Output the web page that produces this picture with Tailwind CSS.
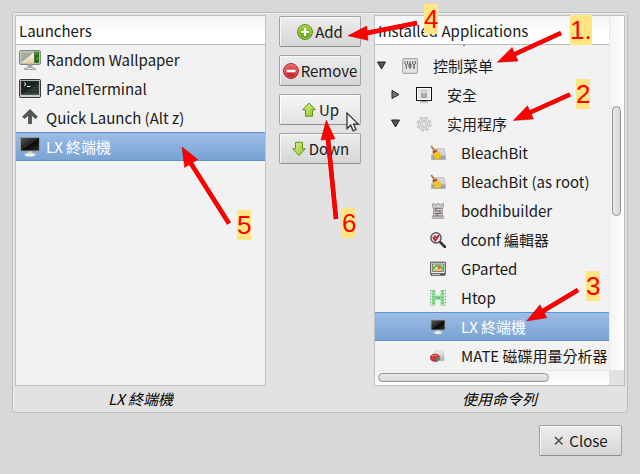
<!DOCTYPE html>
<html lang="zh-Hant">
<head>
<meta charset="utf-8">
<meta name="viewport" content="width=device-width, initial-scale=1">
<title>Launchers</title>
<script src="https://cdn.jsdelivr.net/npm/@tailwindcss/browser@4"></script>
</head>
<body class="relative flex min-h-screen flex-col gap-3 bg-[#d8d8d8] px-3 pt-3 pb-[18px] font-['Noto_Sans_CJK_TC','Noto_Sans_CJK_SC',sans-serif] text-[15px] leading-5 text-[#1a1a1a]">

<svg class="absolute size-0" aria-hidden="true">
  <defs>
    <linearGradient id="screen" x1="0" y1="0" x2="1" y2="1"><stop offset="0" stop-color="#555"/><stop offset=".5" stop-color="#222"/><stop offset=".52" stop-color="#080808"/><stop offset="1" stop-color="#2a2a2a"/></linearGradient>
    <linearGradient id="green" x1="0" y1="0" x2="0" y2="1"><stop offset="0" stop-color="#a6d33c"/><stop offset="1" stop-color="#5b9a0e"/></linearGradient>
    <linearGradient id="lime" x1="0" y1="0" x2="1" y2="1"><stop offset="0" stop-color="#dcee8a"/><stop offset="1" stop-color="#8fc52a"/></linearGradient>
    <linearGradient id="red" x1="0" y1="0" x2="0" y2="1"><stop offset="0" stop-color="#ee6a6a"/><stop offset="1" stop-color="#b81420"/></linearGradient>
    <linearGradient id="metal" x1="0" y1="0" x2="0" y2="1"><stop offset="0" stop-color="#f4f4f4"/><stop offset="1" stop-color="#a8a8a8"/></linearGradient>
    <linearGradient id="sand" x1="0" y1="0" x2="0" y2="1"><stop offset="0" stop-color="#fff"/><stop offset="1" stop-color="#edc795"/></linearGradient>
    <symbol id="monitor" viewBox="0 0 22 22">
      <rect x="1" y="1" width="20" height="14.5" rx="1" fill="#999"/>
      <rect x="2" y="2" width="18" height="12.5" fill="url(#screen)"/>
      <path d="M9 15.5h4l.5 3h-5z" fill="#ccc"/>
      <ellipse cx="11" cy="18.8" rx="5.4" ry="1.8" fill="#f2f2f2" stroke="#b9c3cf" stroke-width=".5"/>
    </symbol>
    <symbol id="broom" viewBox="0 0 16 16">
      <path d="M4 3.5h10l1.500 7v4H1.500v-4z" fill="#d4d4d4" stroke="#b0b0b0" stroke-width=".6"/>
      <path d="M1.500 10.500h14v4h-14z" fill="#a5a5a5"/>
      <path d="M1.200 1 4.500 6" stroke="#b5782a" stroke-width="1.7"/>
      <path d="M2.500 6.500 6.300 4.500 7.500 6.500 3.500 8.600z" fill="#cc3a25"/>
      <path d="M3.400 8.600 7.500 6.400 12.300 11 7.600 14.600 4.600 13.500z" fill="#f5cf2d" stroke="#c69a10" stroke-width=".6"/>
      <path d="m5 9.500 2.500 3.800M7 8.200l3.300 4" stroke="#b98c14" stroke-width=".6"/>
    </symbol>
  </defs>
</svg>

<main class="flex flex-1 rounded-[3px] border border-[#bdbdbd] bg-[#e2e2e2] p-[2px] shadow-[inset_1px_1px_0_#ececec]">

  <section class="flex min-w-0 flex-1 flex-col" aria-labelledby="launchers-title">
    <div class="flex flex-1 flex-col border border-[#c0c0c0] bg-[#f2f2f2]">
      <h2 id="launchers-title" class="flex h-[29px] items-center border-b border-[#b8b8b8] bg-linear-to-b from-[#f4f4f4] to-white to-60% px-[3px] pt-px">Launchers</h2>
      <ul role="listbox" aria-labelledby="launchers-title">
        <li role="option" class="flex h-[29px] items-center gap-[5px] px-[3px]">
          <svg class="size-[22px]" viewBox="0 0 22 22">
            <rect x=".6" y="1.6" width="20.8" height="13.8" rx="1" fill="#c7cbc3" stroke="#777d73"/>
            <rect x="2.4" y="3.4" width="12.6" height="10.2" fill="#a3ab9d"/>
            <path d="M2.4 13.6 15 3.4v10.2z" fill="#e5e6df"/>
            <path d="m5 14 9.5-10.5V14z" fill="url(#sand)"/>
            <rect x="15.2" y="2.7" width="4.8" height="11.2" fill="#276a12"/>
            <path d="M16 3h3v3h-3zM17.5 8h2v3h-2z" fill="#4d9430"/>
            <path d="M8.5 15.5h5v3h-5z" fill="#aaa"/>
            <path d="M5.5 19.5q5.5-2.5 11 0v1h-11z" fill="#e8e8e8" stroke="#858585" stroke-width=".7"/>
          </svg>
          <span>Random Wallpaper</span>
        </li>
        <li role="option" class="flex h-[29px] items-center gap-[5px] px-[3px]">
          <svg class="size-[22px]" viewBox="0 0 22 22">
            <rect x=".5" y="1.5" width="21" height="18" rx="1" fill="#b5b5b5" stroke="#3a3a3a"/>
            <rect x="2" y="3" width="18" height="13.5" fill="#1d2727"/>
            <path d="M2 16.5 20 6v10.5z" fill="#34403d"/>
            <path d="M3 6h16M3 8.5h16M3 11h16M3 13.5h16" stroke="#111b19" stroke-width=".6"/>
            <path d="m5 4.5 2 1.7L5 7.8M8 8.5h3.5" fill="none" stroke="#f0f0f0"/>
            <path d="M1.5 18h19" stroke="#e0e0e0"/>
          </svg>
          <span>PanelTerminal</span>
        </li>
        <li role="option" class="flex h-[29px] items-center gap-[5px] px-[3px]">
          <svg class="size-[22px]" viewBox="0 0 22 22"><path d="m11 2 7.8 7.8-2.3 2.3-3.6-3.2V17H9.1V8.900l-3.6 3.2-2.3-2.3z" fill="#555"/></svg>
          <span>Quick Launch (Alt z)</span>
        </li>
        <li role="option" aria-selected="true" class="flex h-[29px] items-center gap-[5px] border-y border-[#5f92cb] bg-linear-to-b from-[#9dbde6] to-[#78a3d4] px-[3px] text-white">
          <svg class="size-[22px]"><use href="#monitor"/></svg>
          <span>LX 終端機</span>
        </li>
      </ul>
    </div>
    <p class="h-6 pt-[3px] text-center leading-5 text-black italic">LX 終端機</p>
  </section>

  <div class="flex w-[108px] shrink-0 flex-col gap-2 px-[13px] pt-px">
    <button class="flex h-[31px] items-center justify-center gap-[2px] rounded-[2px] border border-[#a3a3a3] border-b-[#8e8e8e] bg-linear-to-b from-[#ededed] to-[#d6d6d6] pt-px shadow-[inset_1px_1px_0_#f8f8f8]">
      <svg class="size-4" viewBox="0 0 16 16"><circle cx="8" cy="8" r="7.4" fill="url(#green)" stroke="#4e8409"/><circle cx="8" cy="8" r="6.4" fill="none" stroke="#c3e37b" stroke-width=".7"/><path d="M8 4v8M4 8h8" stroke="#fff" stroke-width="2.2"/></svg>
      <span>Add</span>
    </button>
    <button class="flex h-[31px] items-center justify-center gap-[2px] rounded-[2px] border border-[#a3a3a3] border-b-[#8e8e8e] bg-linear-to-b from-[#ededed] to-[#d6d6d6] pt-px shadow-[inset_1px_1px_0_#f8f8f8]">
      <svg class="size-4" viewBox="0 0 16 16"><circle cx="8" cy="8" r="7.4" fill="url(#red)" stroke="#ab1019"/><circle cx="8" cy="8" r="6.4" fill="none" stroke="#f09090" stroke-width=".6"/><path d="M3.5 8h9" stroke="#fff" stroke-width="2.6"/></svg>
      <span>Remove</span>
    </button>
    <button class="flex h-[31px] items-center justify-center gap-[2px] rounded-[2px] border border-[#a3a3a3] border-b-[#8e8e8e] bg-linear-to-b from-[#f6f6f6] to-[#e2e2e2] pt-px shadow-[inset_1px_1px_0_#ffffff]">
      <svg class="size-4" viewBox="0 0 16 16"><path d="m8 1 6.3 6.7h-2.8v6.5h-7V7.7H1.7z" fill="url(#lime)" stroke="#649321" stroke-linejoin="round"/></svg>
      <span>Up</span>
    </button>
    <button class="flex h-[31px] items-center justify-center gap-[2px] rounded-[2px] border border-[#a3a3a3] border-b-[#8e8e8e] bg-linear-to-b from-[#ededed] to-[#d6d6d6] pt-px shadow-[inset_1px_1px_0_#f8f8f8]">
      <svg class="size-4" viewBox="0 0 16 16"><path d="m8 14.5 6.3-6.7h-2.8V1.3h-7v6.5H1.7z" fill="url(#lime)" stroke="#649321" stroke-linejoin="round"/></svg>
      <span>Down</span>
    </button>
  </div>

  <section class="flex min-w-0 flex-1 flex-col" aria-labelledby="apps-title">
    <div class="grid flex-1 grid-cols-[minmax(0,1fr)_15px] grid-rows-[minmax(0,1fr)_15px] border border-[#c0c0c0] bg-[#f2f2f2]">
      <div class="overflow-hidden whitespace-nowrap">
        <h2 id="apps-title" class="flex h-[29px] items-center border-b border-[#b8b8b8] bg-linear-to-b from-[#f4f4f4] to-white to-60% px-[3px] pt-px">Installed Applications</h2>
        <div class="h-[6px] pl-[88px]"><div class="h-px w-[2px] bg-[#777]"></div></div>
        <ul role="tree" aria-labelledby="apps-title">
          <li role="treeitem" aria-expanded="true" class="flex h-[29px] items-center gap-[15px] pl-[1px]">
            <svg class="size-[11px]" viewBox="0 0 11 11"><path d="M1.5 2h8L5.5 9z" fill="#555" stroke="#222"/></svg>
            <svg class="size-4" viewBox="0 0 16 16"><rect x=".6" y=".6" width="14.8" height="14.8" rx="1.5" fill="#e3e3e3" stroke="#aaa" stroke-width="1.1"/><path d="M3 3v3l1.3 1L5.6 6V3M4.3 7v4M8 3v8M7 6h2v3H7zM12 11V7m-1.3-4v3L12 7l1.3-1V3M11 9h2" fill="none" stroke="#5c5c5c"/></svg>
            <span>控制菜单</span>
          </li>
          <li role="treeitem" aria-expanded="false" class="flex h-[29px] items-center gap-[15px] pl-[15px]">
            <svg class="size-[11px]" viewBox="0 0 11 11"><path d="M2 1.5v8l7-4z" fill="#777" stroke="#222"/></svg>
            <svg class="size-4" viewBox="0 0 16 16"><rect x=".5" y=".5" width="15" height="13" fill="#fff" stroke="#111"/><rect x="2" y="2" width="12" height="10" fill="#e4e4e4"/><path d="M6 6.5V5a2 2 0 0 1 4 0v1.500" fill="none" stroke="#aaa" stroke-width="1.2"/><path d="M5 6.3h6V11H5z" fill="#aaa"/><path d="M6 14h4v.5h2v1.2H4v-1.2h2z" fill="#aaa"/></svg>
            <span>安全</span>
          </li>
          <li role="treeitem" aria-expanded="true" class="flex h-[29px] items-center gap-[15px] pl-[15px]">
            <svg class="size-[11px]" viewBox="0 0 11 11"><path d="M1.5 2h8L5.5 9z" fill="#555" stroke="#222"/></svg>
            <svg class="size-4" viewBox="0 0 16 16"><circle cx="8" cy="8" r="6.2" fill="none" stroke="#c8c8c8" stroke-width="2.8" stroke-dasharray="2.9 1.97"/><circle cx="8" cy="8" r="5.8" fill="#dedede" stroke="#c8c8c8" stroke-width=".8"/><circle cx="8" cy="8" r="3.6" fill="none" stroke="#c6c6c6"/><circle cx="8" cy="8" r="1.6" fill="#f4f4f4" stroke="#bbb" stroke-width=".7"/></svg>
            <span>实用程序</span>
          </li>
          <li role="treeitem" class="flex h-[29px] items-center gap-[15px] pl-[55px]">
            <svg class="size-4 shrink-0"><use href="#broom"/></svg>
            <span>BleachBit</span>
          </li>
          <li role="treeitem" class="flex h-[29px] items-center gap-[15px] pl-[55px]">
            <svg class="size-4 shrink-0"><use href="#broom"/></svg>
            <span>BleachBit (as root)</span>
          </li>
          <li role="treeitem" class="flex h-[29px] items-center gap-[15px] pl-[55px]">
            <svg class="size-4 shrink-0" viewBox="0 0 16 16"><path d="M2.5.8h2.2v1h2V.8h2.6v1h2V.8h2.2V4l-1 1v7l1.2 1.6v1.8H2.3v-1.8L3.5 12V5l-1-1z" fill="#d0cccc" stroke="#8c8787" stroke-width=".7"/><path d="M4 5.3h8M4.5 8h7M4.5 10.5h7M3.5 13h9M6 5.3V8m4 0v2.5M7 10.5V13" stroke="#655f5f" stroke-width=".9"/></svg>
            <span>bodhibuilder</span>
          </li>
          <li role="treeitem" class="flex h-[29px] items-center gap-[15px] pl-[55px]">
            <svg class="size-4 shrink-0" viewBox="0 0 16 16"><path d="m10 10 5 5" stroke="#333" stroke-width="2.6" stroke-linecap="round"/><circle cx="6" cy="5.9" r="5.1" fill="#eee" stroke="#555" stroke-width="1.4"/><path d="m3 5 2.3 3.5L9 3M4.5 3.5l1.3 2" fill="none" stroke="#ba2430" stroke-width="2"/></svg>
            <span>dconf 編輯器</span>
          </li>
          <li role="treeitem" class="flex h-[29px] items-center gap-[15px] pl-[55px]">
            <svg class="size-4 shrink-0" viewBox="0 0 16 16"><path d="M.7 1.2h14.6v11.6H.7z" fill="#eee" stroke="#444"/><path d="M2.5 3h11v7.5h-11z" fill="#d8e8cf" stroke="#555" stroke-width=".7"/><path d="M3.5 9a4.5 4.5 0 0 1 9 0" fill="none" stroke="#6fba45" stroke-width="2.4"/><path d="M7.5 5a4 4 0 0 1 4 1.5L8 9z" fill="#e95f42"/><path d="M4 9.2h8" stroke="#e4bd45" stroke-width="1.3"/><path d="M.7 12.8h14.6v2H.7z" fill="#555"/><path d="M2 13.5h8" stroke="#ddd" stroke-width=".8"/></svg>
            <span>GParted</span>
          </li>
          <li role="treeitem" class="flex h-[29px] items-center gap-[15px] pl-[55px]">
            <svg class="size-4 shrink-0" viewBox="0 0 16 16"><path d="M0 0h5.5v5.5h5V0H16v15.5h-5.5V10h-5v5.5H0z" fill="#a5dfa8"/><path d="M1 1v14M15 1v14" stroke="#d2ead2" stroke-width="2"/><path d="M3.5 0v15.5M12.5 0v15.5" stroke="#62cc6b" stroke-width="2" stroke-dasharray="2 1"/><path d="M5.5 7.7h5" stroke="#62cc6b" stroke-width="2.4"/><path d="M.5 0v15.5M15.5 0v15.5" stroke="#8aa98b" stroke-dasharray="1 2"/></svg>
            <span>Htop</span>
          </li>
          <li role="treeitem" aria-selected="true" class="flex h-[29px] items-center gap-[15px] border-y border-[#5f92cb] bg-linear-to-b from-[#9dbde6] to-[#78a3d4] pl-[55px] text-white">
            <svg class="size-4 shrink-0"><use href="#monitor"/></svg>
            <span>LX 終端機</span>
          </li>
          <li role="treeitem" class="flex h-[29px] items-center gap-[15px] pl-[55px]">
            <svg class="size-4 shrink-0" viewBox="0 0 16 16"><path d="M5 2.8h7.5l1.5 5v5H4z" fill="url(#metal)" stroke="#bbb" stroke-width=".6"/><ellipse cx="5" cy="9.8" rx="4.8" ry="3.7" fill="#d33038" stroke="#9f1c25" stroke-width=".6"/><path d="M5.3 10 9.6 9a4 3 0 0 1-.9 3z" fill="#54a53a"/><path d="m5.3 10 3.4 2.2a5 4 0 0 1-3.5 1.2z" fill="#466fb5"/><path d="M2 8.5q2-2 5-1" stroke="#ee858a" fill="none"/></svg>
            <span>MATE 磁碟用量分析器</span>
          </li>
        </ul>
      </div>
      <div class="border-l border-[#e9e9e9] bg-linear-to-r from-[#f4f4f4] to-white px-[2px] pt-[90px]" role="scrollbar" aria-orientation="vertical" aria-label="Vertical">
        <div class="h-[110px] w-[9px] rounded-full border border-[#919191] bg-linear-to-r from-[#e9e9e9] to-[#d8d8d8]"></div>
      </div>
      <div class="border-t border-[#e9e9e9] bg-linear-to-b from-[#f4f4f4] to-white px-[3px] pt-[2px]" role="scrollbar" aria-orientation="horizontal" aria-label="Horizontal">
        <div class="h-[9px] w-3/4 rounded-full border border-[#919191] bg-linear-to-b from-[#e9e9e9] to-[#d8d8d8]"></div>
      </div>
      <div class="bg-[#e2e2e2]"></div>
    </div>
    <p class="h-6 pt-[3px] text-center leading-5 text-black italic">使用命令列</p>
  </section>
</main>

<footer class="flex justify-end pr-[6px]">
  <button class="flex h-[31px] w-[83px] items-center justify-center gap-1 rounded-[2px] border border-[#a3a3a3] border-b-[#8e8e8e] bg-linear-to-b from-[#ededed] to-[#d6d6d6] pt-px shadow-[inset_1px_1px_0_#f8f8f8]">
    <svg class="size-3" viewBox="0 0 12 12"><path d="m2 2 7.5 7.5m0-7.5L2 9.5" stroke="#555" stroke-width="1.7"/></svg>
    <span>Close</span>
  </button>
</footer>

<!-- Step callouts drawn over the dialog -->
<div class="pointer-events-none absolute top-0 left-0 font-['Liberation_Sans',Arial,sans-serif] text-[26px] leading-[30px] text-[#f00]">
  <svg class="absolute top-0 left-0 h-[474px] w-[640px]" viewBox="0 0 640 474">
    <path d="M347 113v15.500l3.700-3.300 2.500 5.600 2.800-1.300-2.500-5.400h4.700z" fill="#f4f4f4" stroke="#333" stroke-width="1.3"/>
    <g stroke="#c00" stroke-width="4.6"><path d="m417 23-50 10M561 33l-46 21M570 94.500l-40 18M578 290l-35 21M229 223.500l-38-60M336 219l-8-80"/></g>
    <g stroke="#f00" stroke-width="4"><path d="m417 23-50 10M561 33l-46 21M570 94.500l-40 18M578 290l-35 21M229 223.500l-38-60M336 219l-8-80"/></g>
    <path d="m348 35.700 18.700-9.700 1.300 14.300zM497.300 62.300l14.700-14.800 6 13.500zM513.300 120.500l14.200-14.700 6 13.200zM526.700 321l13.300-16.300 6.700 13zM182 147l2.700 20.500 13-8zM326.300 120.300 321 140l14-1z" fill="#f00" stroke="#b00" stroke-width=".5"/>
  </svg>
  <span class="absolute top-[4px] left-[424px] bg-[#ffe680]">4</span>
  <span class="absolute top-[15px] left-[570px] bg-[#ffe680]">1.</span>
  <span class="absolute top-[79px] left-[576px] bg-[#ffe680]">2</span>
  <span class="absolute top-[271px] left-[586px] bg-[#ffe680]">3</span>
  <span class="absolute top-[210px] left-[237px] bg-[#ffe680]">5</span>
  <span class="absolute top-[208px] left-[342px] bg-[#ffe680]">6</span>
</div>
</body>
</html>
